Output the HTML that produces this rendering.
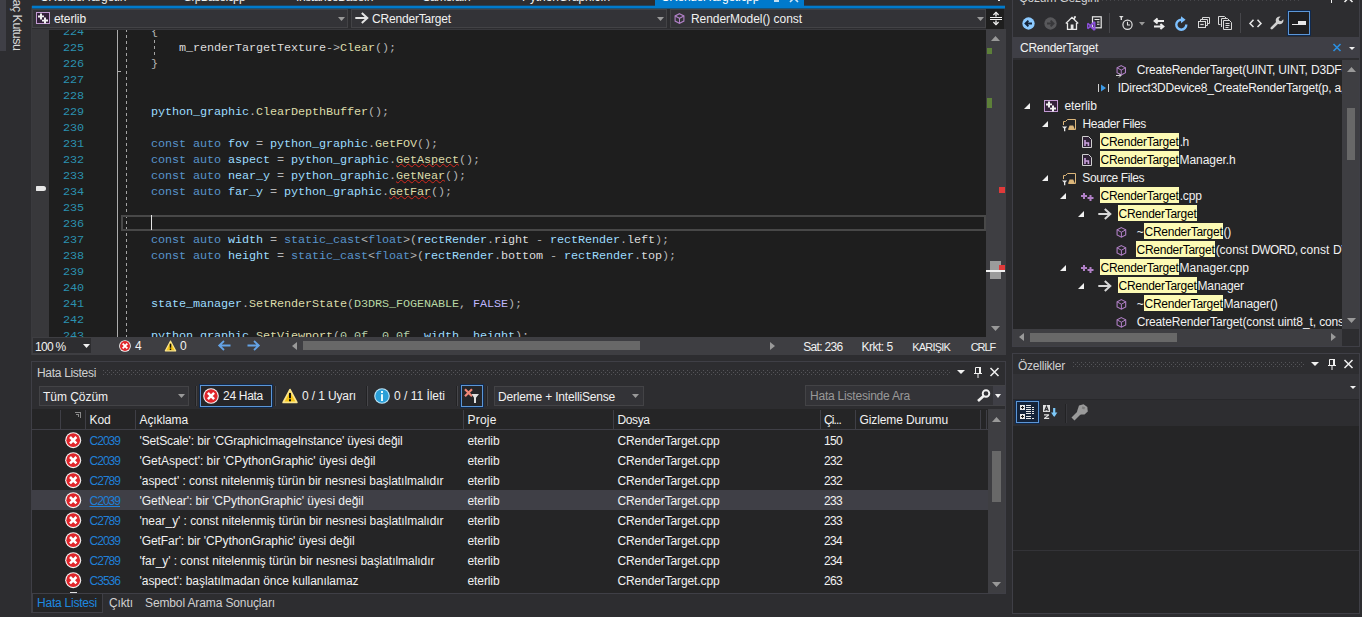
<!DOCTYPE html>
<html><head><meta charset="utf-8">
<style>
*{margin:0;padding:0;box-sizing:border-box}
html,body{width:1362px;height:617px;overflow:hidden;background:#2d2d30}
body{position:relative;font-family:"Liberation Sans",sans-serif;font-size:12px;color:#f1f1f1}
.a{position:absolute}
.t{position:absolute;white-space:pre;line-height:16px;height:16px;font-size:12px;letter-spacing:-0.15px}
svg{position:absolute;overflow:visible}
#ed{position:absolute;left:32px;top:29px;width:954px;height:308px;background:#1e1e1e;overflow:hidden}
.ln{position:absolute;left:0;width:52px;text-align:right;color:#2b91af;font-family:"Liberation Mono",monospace;font-size:11.8px;letter-spacing:-0.08px;line-height:16px;height:16px}
.cl{position:absolute;left:63px;color:#dcdcdc;font-family:"Liberation Mono",monospace;font-size:11.8px;letter-spacing:-0.08px;line-height:16px;height:16px;white-space:pre}
.k{color:#5894cb}.v{color:#9cdcfe}.f{color:#dcdcaa}.e{color:#b8d7a3}.mc{color:#beb7ff}.n{color:#b5cea8}.p{color:#b4b4b4}
.sq{text-decoration:underline wavy #d62a1e 1px;text-underline-offset:0px;text-decoration-skip-ink:none}
.tr{letter-spacing:-0.22px;color:#f1f1f1}
.hl{background:#fdfbac;color:#000;display:inline-block;height:16px;margin-top:-1px;vertical-align:top;padding:1px 1px 0 0;margin-left:-0.3px}

</style></head><body>
<!-- p05_top.py -->
<div class="a" style="left:0;top:0;width:6px;height:51px;background:#3f3f46"></div>
<div class="a" style="left:8.5px;top:-50px;height:100.5px;width:16px;line-height:16px;writing-mode:vertical-rl;text-align:right;white-space:pre;font-size:12.5px;color:#d8d8d8;letter-spacing:-0.520px">Araç Kutusu</div>
<div class="t" style="left:40px;top:-11.2px;letter-spacing:-0.359px;color:#f1f1f1;">CRenderTarget.h</div>
<div class="t" style="left:183px;top:-11.2px;letter-spacing:-0.732px;color:#f1f1f1;">GrpBase.cpp</div>
<div class="t" style="left:296px;top:-11.2px;letter-spacing:-0.410px;color:#f1f1f1;">InstanceBase.h</div>
<div class="t" style="left:422px;top:-11.2px;letter-spacing:-0.586px;color:#f1f1f1;">Camera.h</div>
<div class="t" style="left:522px;top:-11.2px;letter-spacing:-0.093px;color:#f1f1f1;">PythonGraphic.h</div>
<div class="a" style="left:998px;top:0;width:2px;height:1px;background:#f1f1f1"></div>
<div class="a" style="left:32px;top:5px;width:973px;height:1px;background:#1f445f"></div>
<div class="a" style="left:32px;top:8px;width:973px;height:1px;background:#16547e"></div>
<div class="a" style="left:32px;top:6px;width:973px;height:2px;background:#007acc"></div>
<div class="a" style="left:655px;top:0;width:149px;height:8px;background:#007acc"></div>
<div class="t" style="left:661px;top:-11.2px;letter-spacing:-0.357px;color:#ffffff;">CRenderTarget.cpp</div>
<div class="a" style="left:774px;top:0;width:5px;height:1.5px;background:#c4dff2"></div>
<svg style="left:789px;top:-7px" width="10" height="10"><path d="M1 1L9 9M9 1L1 9" stroke="#d0e6f5" stroke-width="1.6"/></svg>
<div class="a" style="left:31px;top:6px;width:1px;height:349px;background:#3a3a3e"></div>
<div class="a" style="left:32px;top:9px;width:973px;height:20px;background:#2d2d30"></div>
<div class="a" style="left:32px;top:9px;width:316px;height:19px;background:#333337;border:1px solid #434346"></div>
<div class="a" style="left:351px;top:9px;width:316px;height:19px;background:#333337;border:1px solid #434346"></div>
<div class="a" style="left:670px;top:9px;width:316px;height:19px;background:#333337;border:1px solid #434346"></div>
<svg style="left:338px;top:17px" width="7" height="4"><path d="M0 0H7L3.5 4Z" fill="#999"/></svg>
<svg style="left:657px;top:17px" width="7" height="4"><path d="M0 0H7L3.5 4Z" fill="#999"/></svg>
<svg style="left:977px;top:17px" width="7" height="4"><path d="M0 0H7L3.5 4Z" fill="#999"/></svg>
<svg style="left:36px;top:12px" width="14" height="12"><rect x="0.5" y="0.5" width="13" height="11" fill="#33203a" stroke="#c39bd3"/><path d="M4 1.5h2v2h2v2h-2v2h-2v-2h-2v-2h2z" fill="#f1f1f1"/><path d="M8 5.5h2v2h2v2h-2v2h-2v-2h-2v-2h2z" fill="#f1f1f1"/><rect x="6" y="5.5" width="2" height="2" fill="#33203a"/></svg>
<div class="t" style="left:54px;top:11px;letter-spacing:-0.098px;color:#f1f1f1;">eterlib</div>
<svg style="left:355px;top:12px" width="14" height="12"><path d="M0.3 6H12M6.8 1L12.3 6L6.8 11" stroke="#e4e4e4" stroke-width="2" fill="none"/></svg>
<div class="t" style="left:372px;top:11px;letter-spacing:-0.183px;color:#f1f1f1;">CRenderTarget</div>
<svg style="left:673.5px;top:12.5px" width="11" height="11" viewBox="0 0 12 12"><path d="M6 0.7L10.8 3.2V8.8L6 11.3L1.2 8.8V3.2Z" fill="none" stroke="#b180c7" stroke-width="1.2"/><path d="M1.2 3.2L6 5.8L10.8 3.2M6 5.8V11.3" fill="none" stroke="#b180c7" stroke-width="1.1"/></svg>
<div class="t" style="left:691px;top:11px;letter-spacing:-0.056px;color:#f1f1f1;">RenderModel() const</div>
<div class="a" style="left:986px;top:9px;width:18px;height:20px;background:#1e1e1e"></div>
<svg style="left:989.5px;top:12px" width="12" height="13"><path d="M0 5.5H12M0 7.5H12" stroke="#f1f1f1" stroke-width="1"/><path d="M6 0.5V4.5M6 8.5V12.5" stroke="#f1f1f1" stroke-width="1.4"/><path d="M3.4 3L6 0.4L8.6 3M3.4 10L6 12.6L8.6 10" stroke="#f1f1f1" stroke-width="1.2" fill="none"/></svg>
<!-- p10_editor.py -->
<div id="ed">
<div class="a" style="left:0;top:0;width:17px;height:308px;background:#38383b"></div>
<div class="a" style="left:85px;top:0;width:1px;height:308px;background:#adadad"></div>
<div class="a" style="left:85px;top:42px;width:4px;height:1px;background:#adadad"></div>
<div class="a" style="left:94px;top:0;width:1px;height:308px;background:repeating-linear-gradient(180deg,#a4a4a4 0 3px,transparent 3px 6px)"></div>
<div class="a" style="left:122px;top:11px;width:1px;height:16px;background:repeating-linear-gradient(180deg,#a4a4a4 0 3px,transparent 3px 6px)"></div>
<div class="a" style="left:89px;top:186px;width:865px;height:16px;border:2px solid #484848"></div>
<div class="a" style="left:119px;top:186px;width:1px;height:15px;background:#e4e4e4"></div>
<div class="a" style="left:4px;top:157px;width:10px;height:5px;background:#e8e8e8;border-radius:1px 3px 3px 1px"></div>
<div class="ln" style="top:-5px">224</div>
<div class="cl" style="top:-5px">        <span class="p">{</span></div>
<div class="ln" style="top:11px">225</div>
<div class="cl" style="top:11px">            m_renderTargetTexture<span class="p">-&gt;</span><span class="f">Clear</span><span class="p">();</span></div>
<div class="ln" style="top:27px">226</div>
<div class="cl" style="top:27px">        <span class="p">}</span></div>
<div class="ln" style="top:43px">227</div>
<div class="ln" style="top:59px">228</div>
<div class="ln" style="top:75px">229</div>
<div class="cl" style="top:75px">        <span class="v">python_graphic</span><span class="p">.</span><span class="f">ClearDepthBuffer</span><span class="p">();</span></div>
<div class="ln" style="top:91px">230</div>
<div class="ln" style="top:107px">231</div>
<div class="cl" style="top:107px">        <span class="k">const auto</span> <span class="v">fov</span> <span class="p">=</span> <span class="v">python_graphic</span><span class="p">.</span><span class="f">GetFOV</span><span class="p">();</span></div>
<div class="ln" style="top:123px">232</div>
<div class="cl" style="top:123px">        <span class="k">const auto</span> <span class="v">aspect</span> <span class="p">=</span> <span class="v">python_graphic</span><span class="p">.</span><span class="f sq">GetAspect</span><span class="p">();</span></div>
<div class="ln" style="top:139px">233</div>
<div class="cl" style="top:139px">        <span class="k">const auto</span> <span class="v">near_y</span> <span class="p">=</span> <span class="v">python_graphic</span><span class="p">.</span><span class="f sq">GetNear</span><span class="p">();</span></div>
<div class="ln" style="top:155px">234</div>
<div class="cl" style="top:155px">        <span class="k">const auto</span> <span class="v">far_y</span> <span class="p">=</span> <span class="v">python_graphic</span><span class="p">.</span><span class="f sq">GetFar</span><span class="p">();</span></div>
<div class="ln" style="top:171px">235</div>
<div class="ln" style="top:187px">236</div>
<div class="ln" style="top:203px">237</div>
<div class="cl" style="top:203px">        <span class="k">const auto</span> <span class="v">width</span> <span class="p">=</span> <span class="k">static_cast</span><span class="p">&lt;</span><span class="k">float</span><span class="p">&gt;(</span><span class="v">rectRender</span><span class="p">.</span>right <span class="p">-</span> <span class="v">rectRender</span><span class="p">.</span>left<span class="p">);</span></div>
<div class="ln" style="top:219px">238</div>
<div class="cl" style="top:219px">        <span class="k">const auto</span> <span class="v">height</span> <span class="p">=</span> <span class="k">static_cast</span><span class="p">&lt;</span><span class="k">float</span><span class="p">&gt;(</span><span class="v">rectRender</span><span class="p">.</span>bottom <span class="p">-</span> <span class="v">rectRender</span><span class="p">.</span>top<span class="p">);</span></div>
<div class="ln" style="top:235px">239</div>
<div class="ln" style="top:251px">240</div>
<div class="ln" style="top:267px">241</div>
<div class="cl" style="top:267px">        <span class="v">state_manager</span><span class="p">.</span><span class="f">SetRenderState</span><span class="p">(</span><span class="e">D3DRS_FOGENABLE</span><span class="p">,</span> <span class="mc">FALSE</span><span class="p">);</span></div>
<div class="ln" style="top:283px">242</div>
<div class="ln" style="top:299px">243</div>
<div class="cl" style="top:299px">        <span class="v">python_graphic</span><span class="p">.</span><span class="f">SetViewport</span><span class="p">(</span><span class="n">0.0f</span><span class="p">,</span> <span class="n">0.0f</span><span class="p">,</span> <span class="v">width</span><span class="p">,</span> <span class="v">height</span><span class="p">);</span></div>
</div>
<div class="a" style="left:32px;top:29px;width:954px;height:1px;background:#38383c"></div>
<!-- p20_edbars.py -->
<div class="a" style="left:986px;top:29px;width:20px;height:308px;background:#3e3e42"></div>
<svg style="left:991px;top:36px" width="9" height="5"><path d="M0 5H9L4.5 0Z" fill="#999"/></svg>
<svg style="left:991px;top:326px" width="9" height="5"><path d="M0 0H9L4.5 5Z" fill="#999"/></svg>
<div class="a" style="left:987px;top:48px;width:5px;height:6px;background:#5d8039"></div>
<div class="a" style="left:987px;top:98px;width:5px;height:10px;background:#5d8039"></div>
<div class="a" style="left:999px;top:187px;width:6px;height:6px;background:#e03a3a"></div>
<div class="a" style="left:990px;top:261px;width:11px;height:18px;background:#9b9b9b"></div>
<div class="a" style="left:999px;top:265px;width:6px;height:6px;background:#e03a3a"></div>
<div class="a" style="left:986px;top:270px;width:19px;height:2px;background:#f1f1f1"></div>
<div class="a" style="left:32px;top:337px;width:974px;height:18px;background:#3e3e42"></div>
<div class="a" style="left:33px;top:338px;width:58px;height:15px;background:#2d2d30"></div>
<div class="t" style="left:35px;top:338.6px;letter-spacing:-0.706px;color:#f1f1f1;">100 %</div>
<svg style="left:83px;top:344px" width="7" height="4"><path d="M0 0H7L3.5 4Z" fill="#f1f1f1"/></svg>
<svg style="left:119px;top:340px" width="12" height="12" viewBox="0 0 16 16"><circle cx="8" cy="8" r="7.8" fill="#f6f6f6"/><circle cx="8" cy="8" r="6.7" fill="#e0262b"/><path d="M4.9 4.9L11.1 11.1M11.1 4.9L4.9 11.1" stroke="#fff" stroke-width="2.5"/></svg>
<div class="t" style="left:135px;top:338px;color:#f1f1f1;">4</div>
<svg style="left:164px;top:340px" width="13" height="12" viewBox="0 0 16 16"><path d="M8 1.6L14.8 14.4H1.2Z" fill="#f5c518" stroke="#fbe58c" stroke-width="1.8" stroke-linejoin="round"/><path d="M7 5h2v5.3h-2zM7 11.3h2v2h-2z" fill="#14110a"/></svg>
<div class="t" style="left:180px;top:338px;color:#f1f1f1;">0</div>
<svg style="left:218px;top:340px" width="13" height="11"><path d="M12.5 5.5H1.5M6 1L1.2 5.5L6 10" stroke="#64a3e6" stroke-width="1.8" fill="none"/></svg>
<svg style="left:247px;top:340px" width="13" height="11"><path d="M0.5 5.5H11.5M7 1L11.8 5.5L7 10" stroke="#64a3e6" stroke-width="1.8" fill="none"/></svg>
<svg style="left:292px;top:342px" width="5" height="8"><path d="M5 0V8L0 4Z" fill="#999"/></svg>
<div class="a" style="left:303px;top:341px;width:337px;height:9px;background:#686868"></div>
<svg style="left:770px;top:342px" width="5" height="8"><path d="M0 0V8L5 4Z" fill="#999"/></svg>
<div class="t" style="left:803.3px;top:339px;letter-spacing:-0.688px;color:#f1f1f1;">Sat: 236</div>
<div class="t" style="left:861.5px;top:339px;letter-spacing:-0.498px;color:#f1f1f1;">Krkt: 5</div>
<div class="t" style="left:912.3px;top:339.3px;font-size:11px;letter-spacing:-0.801px;color:#f1f1f1;">KARIŞIK</div>
<div class="t" style="left:970.8px;top:339.3px;font-size:11px;letter-spacing:-1.134px;color:#f1f1f1;">CRLF</div>
<!-- p30_errlist.py -->
<div class="a" style="left:31px;top:361px;width:975px;height:233px;background:#2d2d30;border:1px solid #3f3f46;border-bottom:none"></div>
<div class="a" style="left:31px;top:594px;width:1px;height:19px;background:#3f3f46"></div>
<div class="t" style="left:37px;top:364.5px;letter-spacing:-0.309px;color:#d0d0d0;">Hata Listesi</div>
<svg style="left:103px;top:370px" width="847" height="5"><defs><pattern id="gp" width="4" height="4" patternUnits="userSpaceOnUse"><rect x="0" y="0" width="1" height="1" fill="#545458"/><rect x="2" y="2" width="1" height="1" fill="#545458"/></pattern></defs><rect width="847" height="5" fill="url(#gp)"/></svg>
<svg style="left:957px;top:370px" width="8" height="4"><path d="M0 0H8L4 4Z" fill="#f1f1f1"/></svg><svg style="left:974px;top:367px" width="8" height="11"><path d="M1.5 6V0.5H6M0 6.5H8M4 7V11" stroke="#f1f1f1" stroke-width="1" fill="none"/><path d="M6 0V6" stroke="#f1f1f1" stroke-width="2"/></svg><svg style="left:990px;top:368px" width="9" height="8"><path d="M0.5 0L8.5 8M8.5 0L0.5 8" stroke="#f1f1f1" stroke-width="1.5"/></svg>
<div class="a" style="left:39px;top:386px;width:150px;height:20px;background:#333337;border:1px solid #434346"></div>
<div class="t" style="left:43px;top:389px;letter-spacing:-0.038px;color:#f1f1f1;">Tüm Çözüm</div>
<svg style="left:178px;top:394px" width="7" height="4"><path d="M0 0H7L3.5 4Z" fill="#999"/></svg>
<div class="a" style="left:195px;top:386px;width:1px;height:20px;background:#222224"></div><div class="a" style="left:196px;top:386px;width:1px;height:20px;background:#46464a"></div>
<div class="a" style="left:274px;top:386px;width:1px;height:20px;background:#222224"></div><div class="a" style="left:275px;top:386px;width:1px;height:20px;background:#46464a"></div>
<div class="a" style="left:366px;top:386px;width:1px;height:20px;background:#222224"></div><div class="a" style="left:367px;top:386px;width:1px;height:20px;background:#46464a"></div>
<div class="a" style="left:456px;top:386px;width:1px;height:20px;background:#222224"></div><div class="a" style="left:457px;top:386px;width:1px;height:20px;background:#46464a"></div>
<div class="a" style="left:486px;top:386px;width:1px;height:20px;background:#222224"></div><div class="a" style="left:487px;top:386px;width:1px;height:20px;background:#46464a"></div>
<div class="a" style="left:200px;top:385px;width:72px;height:22px;background:#252528;border:1px solid #5c96d6;box-shadow:0 0 0 1px #10294d"></div>
<svg style="left:203px;top:388px" width="16" height="16" viewBox="0 0 16 16"><circle cx="8" cy="8" r="7.8" fill="#f6f6f6"/><circle cx="8" cy="8" r="6.7" fill="#e0262b"/><path d="M4.9 4.9L11.1 11.1M11.1 4.9L4.9 11.1" stroke="#fff" stroke-width="2.5"/></svg>
<div class="t" style="left:223px;top:388px;letter-spacing:-0.290px;color:#f1f1f1;">24 Hata</div>
<svg style="left:282px;top:388px" width="16" height="16" viewBox="0 0 16 16"><path d="M8 1.6L14.8 14.4H1.2Z" fill="#f5c518" stroke="#fbe58c" stroke-width="1.8" stroke-linejoin="round"/><path d="M7 5h2v5.3h-2zM7 11.3h2v2h-2z" fill="#14110a"/></svg>
<div class="t" style="left:302px;top:388px;letter-spacing:-0.124px;color:#f1f1f1;">0 / 1 Uyarı</div>
<svg style="left:374px;top:388px" width="16" height="16" viewBox="0 0 16 16"><circle cx="8" cy="8" r="7.8" fill="#bfe6fa"/><circle cx="8" cy="8" r="6.7" fill="#2a9fd8"/><path d="M7 3h2v2h-2zM7 6.3h2v6.7h-2z" fill="#e6fbff"/></svg>
<div class="t" style="left:394px;top:388px;letter-spacing:-0.012px;color:#f1f1f1;">0 / 11 İleti</div>
<div class="a" style="left:461px;top:385px;width:22px;height:22px;background:#252528;border:1px solid #5c96d6;box-shadow:0 0 0 1px #10294d"></div>
<svg style="left:464px;top:388px" width="16" height="16"><path d="M1 1.2L8 8.2M8 1.2L1 8.2" stroke="#f08878" stroke-width="2.2"/><path d="M7.6 6H15L12 9.8V15H10V9.8Z" fill="#e0e0e0"/></svg>
<div class="a" style="left:494px;top:386px;width:150px;height:20px;background:#333337;border:1px solid #434346"></div>
<div class="t" style="left:498px;top:389px;letter-spacing:-0.185px;color:#f1f1f1;">Derleme + IntelliSense</div>
<svg style="left:632px;top:394px" width="7" height="4"><path d="M0 0H7L3.5 4Z" fill="#999"/></svg>
<div class="a" style="left:805px;top:385px;width:200px;height:21px;background:#333337;border:1px solid #434346"></div>
<div class="a" style="left:993px;top:386px;width:12px;height:19px;background:#3f3f46"></div>
<div class="t" style="left:810px;top:388px;letter-spacing:-0.214px;color:#999999;">Hata Listesinde Ara</div>
<svg style="left:977px;top:389px" width="14" height="13"><circle cx="9" cy="4.5" r="3.3" fill="none" stroke="#f1f1f1" stroke-width="1.9"/><path d="M6.6 7L1 12" stroke="#f1f1f1" stroke-width="2.6"/></svg>
<svg style="left:995px;top:394px" width="6" height="4"><path d="M0 0H6L3 4Z" fill="#f1f1f1"/></svg>
<div class="a" style="left:32px;top:409px;width:956px;height:184px;background:#252526"></div>
<div class="a" style="left:32px;top:429px;width:956px;height:1px;background:#3f3f46"></div>
<div class="a" style="left:60px;top:410px;width:1px;height:19px;background:#3f3f46"></div>
<div class="a" style="left:85px;top:410px;width:1px;height:19px;background:#3f3f46"></div>
<div class="a" style="left:135px;top:410px;width:1px;height:19px;background:#3f3f46"></div>
<div class="a" style="left:463px;top:410px;width:1px;height:19px;background:#3f3f46"></div>
<div class="a" style="left:613px;top:410px;width:1px;height:19px;background:#3f3f46"></div>
<div class="a" style="left:820px;top:410px;width:1px;height:19px;background:#3f3f46"></div>
<div class="a" style="left:855px;top:410px;width:1px;height:19px;background:#3f3f46"></div>
<div class="a" style="left:980px;top:410px;width:1px;height:19px;background:#3f3f46"></div>
<div class="a" style="left:986px;top:410px;width:1px;height:19px;background:#3f3f46"></div>
<svg style="left:75px;top:412px" width="6" height="6"><path d="M0 0.5H6M5.5 0V6M1 2.5H4M3.5 2V5" stroke="#8a8a8a" stroke-width="1" fill="none"/></svg>
<div class="t" style="left:89.5px;top:411.5px;letter-spacing:-0.120px;color:#f1f1f1;">Kod</div>
<div class="t" style="left:139.5px;top:411.5px;letter-spacing:-0.107px;color:#f1f1f1;">Açıklama</div>
<div class="t" style="left:467.5px;top:411.5px;letter-spacing:0.197px;color:#f1f1f1;">Proje</div>
<div class="t" style="left:617.5px;top:411.5px;letter-spacing:-0.403px;color:#f1f1f1;">Dosya</div>
<div class="t" style="left:824px;top:411.5px;letter-spacing:-0.869px;color:#f1f1f1;">Çi...</div>
<div class="t" style="left:859.5px;top:411.5px;letter-spacing:-0.109px;color:#f1f1f1;">Gizleme Durumu</div>
<div class="a" style="left:32px;top:490px;width:956px;height:20px;background:#3f3f46"></div>
<svg style="left:65px;top:432px" width="16.4" height="16.4" viewBox="0 0 16 16"><circle cx="8" cy="8" r="7.8" fill="#f6f6f6"/><circle cx="8" cy="8" r="6.7" fill="#e0262b"/><path d="M4.9 4.9L11.1 11.1M11.1 4.9L4.9 11.1" stroke="#fff" stroke-width="2.5"/></svg>
<div class="t" style="left:89.5px;top:433px;letter-spacing:-0.975px;color:#2080d8;">C2039</div>
<div class="t" style="left:139.5px;top:433px;letter-spacing:-0.137px;color:#f1f1f1;">'SetScale': bir 'CGraphicImageInstance' üyesi değil</div>
<div class="t" style="left:467.5px;top:433px;letter-spacing:-0.098px;color:#f1f1f1;">eterlib</div>
<div class="t" style="left:617.5px;top:433px;letter-spacing:-0.121px;color:#f1f1f1;">CRenderTarget.cpp</div>
<div class="t" style="left:824px;top:433px;letter-spacing:-0.677px;color:#f1f1f1;">150</div>
<svg style="left:65px;top:452px" width="16.4" height="16.4" viewBox="0 0 16 16"><circle cx="8" cy="8" r="7.8" fill="#f6f6f6"/><circle cx="8" cy="8" r="6.7" fill="#e0262b"/><path d="M4.9 4.9L11.1 11.1M11.1 4.9L4.9 11.1" stroke="#fff" stroke-width="2.5"/></svg>
<div class="t" style="left:89.5px;top:453px;letter-spacing:-0.975px;color:#2080d8;">C2039</div>
<div class="t" style="left:139.5px;top:453px;letter-spacing:-0.014px;color:#f1f1f1;">'GetAspect': bir 'CPythonGraphic' üyesi değil</div>
<div class="t" style="left:467.5px;top:453px;letter-spacing:-0.098px;color:#f1f1f1;">eterlib</div>
<div class="t" style="left:617.5px;top:453px;letter-spacing:-0.121px;color:#f1f1f1;">CRenderTarget.cpp</div>
<div class="t" style="left:824px;top:453px;letter-spacing:-0.677px;color:#f1f1f1;">232</div>
<svg style="left:65px;top:472px" width="16.4" height="16.4" viewBox="0 0 16 16"><circle cx="8" cy="8" r="7.8" fill="#f6f6f6"/><circle cx="8" cy="8" r="6.7" fill="#e0262b"/><path d="M4.9 4.9L11.1 11.1M11.1 4.9L4.9 11.1" stroke="#fff" stroke-width="2.5"/></svg>
<div class="t" style="left:89.5px;top:473px;letter-spacing:-0.975px;color:#2080d8;">C2789</div>
<div class="t" style="left:139.5px;top:473px;letter-spacing:-0.034px;color:#f1f1f1;">'aspect' : const nitelenmiş türün bir nesnesi başlatılmalıdır</div>
<div class="t" style="left:467.5px;top:473px;letter-spacing:-0.098px;color:#f1f1f1;">eterlib</div>
<div class="t" style="left:617.5px;top:473px;letter-spacing:-0.121px;color:#f1f1f1;">CRenderTarget.cpp</div>
<div class="t" style="left:824px;top:473px;letter-spacing:-0.677px;color:#f1f1f1;">232</div>
<svg style="left:65px;top:492px" width="16.4" height="16.4" viewBox="0 0 16 16"><circle cx="8" cy="8" r="7.8" fill="#f6f6f6"/><circle cx="8" cy="8" r="6.7" fill="#e0262b"/><path d="M4.9 4.9L11.1 11.1M11.1 4.9L4.9 11.1" stroke="#fff" stroke-width="2.5"/></svg>
<div class="t" style="left:89.5px;top:493px;letter-spacing:-0.975px;color:#2080d8;text-decoration:underline;">C2039</div>
<div class="t" style="left:139.5px;top:493px;letter-spacing:-0.045px;color:#f1f1f1;">'GetNear': bir 'CPythonGraphic' üyesi değil</div>
<div class="t" style="left:467.5px;top:493px;letter-spacing:-0.098px;color:#f1f1f1;">eterlib</div>
<div class="t" style="left:617.5px;top:493px;letter-spacing:-0.121px;color:#f1f1f1;">CRenderTarget.cpp</div>
<div class="t" style="left:824px;top:493px;letter-spacing:-0.677px;color:#f1f1f1;">233</div>
<svg style="left:65px;top:512px" width="16.4" height="16.4" viewBox="0 0 16 16"><circle cx="8" cy="8" r="7.8" fill="#f6f6f6"/><circle cx="8" cy="8" r="6.7" fill="#e0262b"/><path d="M4.9 4.9L11.1 11.1M11.1 4.9L4.9 11.1" stroke="#fff" stroke-width="2.5"/></svg>
<div class="t" style="left:89.5px;top:513px;letter-spacing:-0.975px;color:#2080d8;">C2789</div>
<div class="t" style="left:139.5px;top:513px;letter-spacing:-0.056px;color:#f1f1f1;">'near_y' : const nitelenmiş türün bir nesnesi başlatılmalıdır</div>
<div class="t" style="left:467.5px;top:513px;letter-spacing:-0.098px;color:#f1f1f1;">eterlib</div>
<div class="t" style="left:617.5px;top:513px;letter-spacing:-0.121px;color:#f1f1f1;">CRenderTarget.cpp</div>
<div class="t" style="left:824px;top:513px;letter-spacing:-0.677px;color:#f1f1f1;">233</div>
<svg style="left:65px;top:532px" width="16.4" height="16.4" viewBox="0 0 16 16"><circle cx="8" cy="8" r="7.8" fill="#f6f6f6"/><circle cx="8" cy="8" r="6.7" fill="#e0262b"/><path d="M4.9 4.9L11.1 11.1M11.1 4.9L4.9 11.1" stroke="#fff" stroke-width="2.5"/></svg>
<div class="t" style="left:89.5px;top:533px;letter-spacing:-0.975px;color:#2080d8;">C2039</div>
<div class="t" style="left:139.5px;top:533px;letter-spacing:-0.070px;color:#f1f1f1;">'GetFar': bir 'CPythonGraphic' üyesi değil</div>
<div class="t" style="left:467.5px;top:533px;letter-spacing:-0.098px;color:#f1f1f1;">eterlib</div>
<div class="t" style="left:617.5px;top:533px;letter-spacing:-0.121px;color:#f1f1f1;">CRenderTarget.cpp</div>
<div class="t" style="left:824px;top:533px;letter-spacing:-0.677px;color:#f1f1f1;">234</div>
<svg style="left:65px;top:552px" width="16.4" height="16.4" viewBox="0 0 16 16"><circle cx="8" cy="8" r="7.8" fill="#f6f6f6"/><circle cx="8" cy="8" r="6.7" fill="#e0262b"/><path d="M4.9 4.9L11.1 11.1M11.1 4.9L4.9 11.1" stroke="#fff" stroke-width="2.5"/></svg>
<div class="t" style="left:89.5px;top:553px;letter-spacing:-0.975px;color:#2080d8;">C2789</div>
<div class="t" style="left:139.5px;top:553px;letter-spacing:-0.040px;color:#f1f1f1;">'far_y' : const nitelenmiş türün bir nesnesi başlatılmalıdır</div>
<div class="t" style="left:467.5px;top:553px;letter-spacing:-0.098px;color:#f1f1f1;">eterlib</div>
<div class="t" style="left:617.5px;top:553px;letter-spacing:-0.121px;color:#f1f1f1;">CRenderTarget.cpp</div>
<div class="t" style="left:824px;top:553px;letter-spacing:-0.677px;color:#f1f1f1;">234</div>
<svg style="left:65px;top:572px" width="16.4" height="16.4" viewBox="0 0 16 16"><circle cx="8" cy="8" r="7.8" fill="#f6f6f6"/><circle cx="8" cy="8" r="6.7" fill="#e0262b"/><path d="M4.9 4.9L11.1 11.1M11.1 4.9L4.9 11.1" stroke="#fff" stroke-width="2.5"/></svg>
<div class="t" style="left:89.5px;top:573px;letter-spacing:-0.975px;color:#2080d8;">C3536</div>
<div class="t" style="left:139.5px;top:573px;letter-spacing:-0.042px;color:#f1f1f1;">'aspect': başlatılmadan önce kullanılamaz</div>
<div class="t" style="left:467.5px;top:573px;letter-spacing:-0.098px;color:#f1f1f1;">eterlib</div>
<div class="t" style="left:617.5px;top:573px;letter-spacing:-0.121px;color:#f1f1f1;">CRenderTarget.cpp</div>
<div class="t" style="left:824px;top:573px;letter-spacing:-0.677px;color:#f1f1f1;">263</div>
<div class="a" style="left:69.5px;top:592px;width:7px;height:1px;background:#e0e0e0"></div>
<div class="a" style="left:988px;top:409px;width:17px;height:184px;background:#3e3e42"></div>
<svg style="left:992px;top:417px" width="9" height="5"><path d="M0 5H9L4.5 0Z" fill="#999"/></svg>
<svg style="left:992px;top:582px" width="9" height="5"><path d="M0 0H9L4.5 5Z" fill="#999"/></svg>
<div class="a" style="left:992px;top:451px;width:9px;height:51px;background:#686868"></div>
<div class="a" style="left:32px;top:593px;width:973px;height:1px;background:#3f3f46"></div>
<div class="a" style="left:32px;top:594px;width:71px;height:19px;background:#252526;border:1px solid #3f3f46;border-top:none"></div>
<div class="t" style="left:37px;top:595px;letter-spacing:-0.225px;color:#1d8ae0;">Hata Listesi</div>
<div class="t" style="left:109px;top:595px;letter-spacing:-0.134px;color:#d0d0d0;">Çıktı</div>
<div class="t" style="left:145px;top:595px;letter-spacing:-0.124px;color:#d0d0d0;">Sembol Arama Sonuçları</div>
<!-- p40_solexp.py -->
<div class="a" style="left:1012px;top:-2px;width:348px;height:349px;background:#2d2d30;border:1px solid #3f3f46"></div>
<div class="t" style="left:1019px;top:-10.5px;letter-spacing:-0.156px;color:#d0d0d0;">Çözüm Gezgini</div>
<div class="a" style="left:1102px;top:0;width:200px;height:1px;background-image:linear-gradient(90deg,#46464a 1px,transparent 1px);background-size:4px 1px"></div>
<div class="a" style="left:1331px;top:0;width:1px;height:3px;background:#f1f1f1"></div>
<svg style="left:1344px;top:-6px" width="9" height="8"><path d="M0.5 0L8.5 8M8.5 0L0.5 8" stroke="#f1f1f1" stroke-width="1.5"/></svg>
<svg style="left:1021.5px;top:16.5px" width="13" height="13"><circle cx="6.5" cy="6.5" r="6.15" fill="#8ccaff"/><path d="M10 6.5H4M6.4 3.6L3.5 6.5L6.4 9.4" stroke="#14243a" stroke-width="1.9" fill="none"/></svg><svg style="left:1043.5px;top:16.5px" width="13" height="13"><circle cx="6.5" cy="6.5" r="6.15" fill="#58585b"/><path d="M3 6.5H9M6.6 3.6L9.5 6.5L6.6 9.4" stroke="#38383b" stroke-width="1.9" fill="none"/></svg><svg style="left:1065px;top:16px" width="14" height="14"><path d="M0.8 7.5L7 1.3L13.2 7.5M2.5 7V13.3H11.5V7M9.5 3.5V1H11" stroke="#e8e8e8" stroke-width="1.3" fill="none"/><rect x="5.7" y="8.5" width="2.8" height="4.5" fill="#e8e8e8"/></svg><svg style="left:1086.5px;top:15.5px" width="15" height="15"><rect x="5.5" y="0.8" width="8.7" height="11" fill="none" stroke="#e8e8e8" stroke-width="1.2"/><path d="M7.5 3.5H12.5M10 6H12.5M10 8.3H12.5" stroke="#e8e8e8" stroke-width="1.1"/><path d="M0 7.5L1.2 6.8L3.4 8.6L6.8 5.2L8.5 6V14L6.8 14.8L3.4 11.4L1.2 13.2L0 12.5ZM1.3 8.7V11.3L2.6 10ZM6.6 8V12L4.3 10Z" fill="#8a4fd8" fill-rule="evenodd"/></svg><div class="a" style="left:1109px;top:13px;width:1px;height:20px;background:#46464a"></div><svg style="left:1118.5px;top:16px" width="14" height="14"><path d="M0 0H4.6L3 1.8V4H1.6V1.8Z" fill="#e0e0e0"/><circle cx="8.5" cy="8.7" r="4.6" fill="none" stroke="#e0e0e0" stroke-width="1.2"/><path d="M8.5 5.8V9H11" stroke="#e0e0e0" stroke-width="1.1" fill="none"/></svg><svg style="left:1139px;top:22px" width="6" height="3.5"><path d="M0 0H6L3 3.5Z" fill="#999"/></svg><svg style="left:1153px;top:17.5px" width="12" height="12"><path d="M11 3H2M4.6 0.4L1.6 3L4.6 5.6M1 8.5H10M7.4 5.9L10.4 8.5L7.4 11.1" stroke="#ececec" stroke-width="2" fill="none"/></svg><svg style="left:1174.5px;top:16px" width="13" height="15"><path d="M11.3 8.6A5 5 0 1 1 6.5 3.7" stroke="#7cc0ff" stroke-width="2.4" fill="none"/><path d="M6 0.2L10.6 3.7L6 7.2Z" fill="#7cc0ff"/></svg><svg style="left:1197.5px;top:17px" width="12" height="11"><path d="M4.5 2.5V0.5H11.5V6.5H9.5" stroke="#d8d8d8" stroke-width="1" fill="none"/><path d="M2.5 4.5V2.5H9.5V8.5H7.5" stroke="#d8d8d8" stroke-width="1" fill="none"/><rect x="0.5" y="4.5" width="7" height="6" fill="none" stroke="#d8d8d8" stroke-width="1"/><path d="M2.3 7.5H5.7" stroke="#d8d8d8" stroke-width="1.2"/></svg><svg style="left:1217.5px;top:16px" width="15" height="14"><path d="M2.5 8.5H0.5V0.5H6.5L8 2" stroke="#d8d8d8" stroke-width="1" fill="none"/><path d="M3.5 11V2.5H9.5L11.5 4.5V5" stroke="#d8d8d8" stroke-width="1" fill="none"/><path d="M5.5 4.5H11.5L13.5 6.5V13.5H5.5Z" stroke="#d8d8d8" stroke-width="1" fill="none"/><path d="M7.5 7.5H11.5M7.5 9.5H11.5M7.5 11.5H10.5" stroke="#d8d8d8" stroke-width="1"/></svg><div class="a" style="left:1240px;top:13px;width:1px;height:20px;background:#46464a"></div><svg style="left:1248.5px;top:18.5px" width="13" height="9"><path d="M4.5 0.7L1 4.4L4.5 8.1M8.5 0.7L12 4.4L8.5 8.1" stroke="#e8e8e8" stroke-width="1.5" fill="none"/></svg><svg style="left:1270px;top:16px" width="14" height="14"><path d="M1.8 12.2L8 6" stroke="#d0d0d0" stroke-width="2.6" stroke-linecap="round"/><path d="M13.3 3.2A3.9 3.9 0 1 1 10.6 0.6L8.6 3L9.3 4.8L11.2 5.3Z" fill="#d0d0d0"/></svg><div class="a" style="left:1288px;top:11px;width:22px;height:24px;background:#1e1e20;border:1px solid #5c96d6;box-shadow:0 0 0 1px #10294d"></div><div class="a" style="left:1292px;top:24px;width:14px;height:1px;background:#e8e8e8"></div><div class="a" style="left:1298px;top:21px;width:8px;height:4px;background:#e8e8e8"></div>
<div class="a" style="left:1013px;top:37px;width:346px;height:21px;background:#3f3f46"></div>
<div class="t" style="left:1020px;top:40.3px;letter-spacing:-0.260px;color:#f1f1f1;">CRenderTarget</div>
<svg style="left:1333px;top:44px" width="8" height="7"><path d="M0.5 0L7.5 7M7.5 0L0.5 7" stroke="#2b8fe0" stroke-width="1.6"/></svg>
<svg style="left:1349px;top:46.5px" width="6" height="3"><path d="M0 0H6L3 3Z" fill="#f1f1f1"/></svg>
<div class="a" style="left:1013px;top:60px;width:329px;height:269px;background:#252526;overflow:hidden" id="tree">
<svg style="left:103px;top:5px" width="10.5" height="10.5" viewBox="0 0 12 12"><path d="M6 0.7L10.8 3.2V8.8L6 11.3L1.2 8.8V3.2Z" fill="none" stroke="#b180c7" stroke-width="1.2"/><path d="M1.2 3.2L6 5.8L10.8 3.2M6 5.8V11.3" fill="none" stroke="#b180c7" stroke-width="1.1"/></svg>
<svg style="left:102.5px;top:12.5px" width="6" height="5"><path d="M0 2.5H5M3 0.5L5 2.5L3 4.5" stroke="#d0d0d0" stroke-width="1" fill="none"/></svg>
<div class="t" style="left:123.7px;top:2.3px;letter-spacing:-0.179px;color:#f1f1f1;">CreateRenderTarget(UINT, </div>
<div class="t" style="left:265.3px;top:2.3px;letter-spacing:-0.107px;color:#f1f1f1;">UINT, </div>
<div class="t tr" style="left:298px;top:2.3px;color:#f1f1f1;">D3DFORMAT</div>
<svg style="left:85px;top:24px" width="11" height="8"><path d="M0.5 0V8M10.5 0V8" stroke="#d0d0d0" stroke-width="1"/><path d="M3 0.5V7.5L8 4Z" fill="#3c9be8"/></svg>
<div class="t" style="left:104.7px;top:20.3px;letter-spacing:-0.241px;color:#f1f1f1;">IDirect3DDevice8_CreateRenderTarget(p, </div>
<div class="t tr" style="left:321.4px;top:20.3px;color:#f1f1f1;">a, b</div>
<svg style="left:11px;top:43px" width="6" height="6"><path d="M6 0V6H0Z" fill="#f1f1f1"/></svg>
<svg style="left:31px;top:40px" width="14" height="12"><rect x="0.5" y="0.5" width="13" height="11" fill="#33203a" stroke="#c39bd3"/><path d="M4 1.5h2v2h2v2h-2v2h-2v-2h-2v-2h2z" fill="#f1f1f1"/><path d="M8 5.5h2v2h2v2h-2v2h-2v-2h-2v-2h2z" fill="#f1f1f1"/><rect x="6" y="5.5" width="2" height="2" fill="#33203a"/></svg>
<div class="t" style="left:51.4px;top:38.3px;letter-spacing:-0.041px;color:#f1f1f1;">eterlib</div>
<svg style="left:29px;top:61px" width="6" height="6"><path d="M6 0V6H0Z" fill="#f1f1f1"/></svg>
<svg style="left:49px;top:59px" width="14" height="13"><path d="M3.5 2.5L5.5 0.5H13.5V10.5H6.5M3.5 2.5H1.5V6" fill="none" stroke="#dcb67a" stroke-width="1"/><path d="M6 10.5L7.6 6.5H11.2L13 10.5Z" fill="#dcb67a"/><path d="M0 7.5H5.2L3.3 9.6V12.2H2V9.6Z" fill="#e8e8e8"/></svg>
<div class="t" style="left:69.6px;top:56.3px;letter-spacing:-0.403px;color:#f1f1f1;">Header Files</div>
<svg style="left:69px;top:76px" width="10" height="12"><path d="M0.5 0.5H6.5L9.5 3.5V11.5H0.5Z" fill="#2f2236" stroke="#cfcfcf" stroke-width="1"/><path d="M3 4V10M3 7H6.4V10" stroke="#c9a0dc" stroke-width="1.6" fill="none"/></svg>
<div class="a" style="left:86.7px;top:73.3px;width:79.4px;height:16px;background:#fcfab4"></div>
<div class="t" style="left:87.5px;top:74.3px;letter-spacing:-0.260px;color:#000;">CRenderTarget</div>
<div class="t" style="left:166.7px;top:74.3px;letter-spacing:-0.508px;color:#f1f1f1;">.h</div>
<svg style="left:69px;top:94px" width="10" height="12"><path d="M0.5 0.5H6.5L9.5 3.5V11.5H0.5Z" fill="#2f2236" stroke="#cfcfcf" stroke-width="1"/><path d="M3 4V10M3 7H6.4V10" stroke="#c9a0dc" stroke-width="1.6" fill="none"/></svg>
<div class="a" style="left:86.7px;top:91.3px;width:79.4px;height:16px;background:#fcfab4"></div>
<div class="t" style="left:87.5px;top:92.3px;letter-spacing:-0.260px;color:#000;">CRenderTarget</div>
<div class="t" style="left:166.5px;top:92.3px;letter-spacing:-0.058px;color:#f1f1f1;">Manager.h</div>
<svg style="left:29px;top:115px" width="6" height="6"><path d="M6 0V6H0Z" fill="#f1f1f1"/></svg>
<svg style="left:49px;top:113px" width="14" height="13"><path d="M3.5 2.5L5.5 0.5H13.5V10.5H6.5M3.5 2.5H1.5V6" fill="none" stroke="#dcb67a" stroke-width="1"/><path d="M6 10.5L7.6 6.5H11.2L13 10.5Z" fill="#dcb67a"/><path d="M0 7.5H5.2L3.3 9.6V12.2H2V9.6Z" fill="#e8e8e8"/></svg>
<div class="t" style="left:69.3px;top:110.3px;letter-spacing:-0.417px;color:#f1f1f1;">Source Files</div>
<svg style="left:47px;top:133px" width="6" height="6"><path d="M6 0V6H0Z" fill="#f1f1f1"/></svg>
<svg style="left:68px;top:132.5px" width="13" height="8"><path d="M3 0V6M0 3H6" stroke="#b180c7" stroke-width="2"/><path d="M9.5 2V8M6.5 5H12.5" stroke="#b180c7" stroke-width="2"/></svg>
<div class="a" style="left:86.7px;top:127.3px;width:79.4px;height:16px;background:#fcfab4"></div>
<div class="t" style="left:87.5px;top:128.3px;letter-spacing:-0.260px;color:#000;">CRenderTarget</div>
<div class="t" style="left:166.7px;top:128.3px;letter-spacing:-0.147px;color:#f1f1f1;">.cpp</div>
<svg style="left:65px;top:151px" width="6" height="6"><path d="M6 0V6H0Z" fill="#f1f1f1"/></svg>
<svg style="left:85px;top:148px" width="14" height="12"><path d="M0.3 6H12M6.8 1L12.3 6L6.8 11" stroke="#d8d8d8" stroke-width="2" fill="none"/></svg>
<div class="a" style="left:104.7px;top:145.3px;width:79.4px;height:16px;background:#fcfab4"></div>
<div class="t" style="left:105.5px;top:146.3px;letter-spacing:-0.260px;color:#000;">CRenderTarget</div>
<svg style="left:102.5px;top:166.7px" width="10.8" height="10.8" viewBox="0 0 12 12"><path d="M6 0.7L10.8 3.2V8.8L6 11.3L1.2 8.8V3.2Z" fill="none" stroke="#b180c7" stroke-width="1.2"/><path d="M1.2 3.2L6 5.8L10.8 3.2M6 5.8V11.3" fill="none" stroke="#b180c7" stroke-width="1.1"/></svg>
<div class="t tr" style="left:123.7px;top:164.3px;color:#f1f1f1;">~</div>
<div class="a" style="left:130.7px;top:163.3px;width:79.4px;height:16px;background:#fcfab4"></div>
<div class="t" style="left:131.5px;top:164.3px;letter-spacing:-0.260px;color:#000;">CRenderTarget</div>
<div class="t" style="left:210.5px;top:164.3px;letter-spacing:-0.350px;color:#f1f1f1;">()</div>
<svg style="left:102.5px;top:184.7px" width="10.8" height="10.8" viewBox="0 0 12 12"><path d="M6 0.7L10.8 3.2V8.8L6 11.3L1.2 8.8V3.2Z" fill="none" stroke="#b180c7" stroke-width="1.2"/><path d="M1.2 3.2L6 5.8L10.8 3.2M6 5.8V11.3" fill="none" stroke="#b180c7" stroke-width="1.1"/></svg>
<div class="a" style="left:122.7px;top:181.3px;width:79.4px;height:16px;background:#fcfab4"></div>
<div class="t" style="left:123.5px;top:182.3px;letter-spacing:-0.260px;color:#000;">CRenderTarget</div>
<div class="t" style="left:202.7px;top:182.3px;letter-spacing:-0.059px;color:#f1f1f1;">(const </div>
<div class="t" style="left:238.3px;top:182.3px;letter-spacing:-0.618px;color:#f1f1f1;">DWORD, </div>
<div class="t" style="left:287.3px;top:182.3px;letter-spacing:0.114px;color:#f1f1f1;">const </div>
<div class="t tr" style="left:320px;top:182.3px;color:#f1f1f1;">DWORD</div>
<svg style="left:47px;top:205px" width="6" height="6"><path d="M6 0V6H0Z" fill="#f1f1f1"/></svg>
<svg style="left:68px;top:204.5px" width="13" height="8"><path d="M3 0V6M0 3H6" stroke="#b180c7" stroke-width="2"/><path d="M9.5 2V8M6.5 5H12.5" stroke="#b180c7" stroke-width="2"/></svg>
<div class="a" style="left:86.7px;top:199.3px;width:79.4px;height:16px;background:#fcfab4"></div>
<div class="t" style="left:87.5px;top:200.3px;letter-spacing:-0.260px;color:#000;">CRenderTarget</div>
<div class="t" style="left:166.5px;top:200.3px;letter-spacing:0.010px;color:#f1f1f1;">Manager.cpp</div>
<svg style="left:65px;top:223px" width="6" height="6"><path d="M6 0V6H0Z" fill="#f1f1f1"/></svg>
<svg style="left:85px;top:220px" width="14" height="12"><path d="M0.3 6H12M6.8 1L12.3 6L6.8 11" stroke="#d8d8d8" stroke-width="2" fill="none"/></svg>
<div class="a" style="left:104.7px;top:217.3px;width:79.4px;height:16px;background:#fcfab4"></div>
<div class="t" style="left:105.5px;top:218.3px;letter-spacing:-0.260px;color:#000;">CRenderTarget</div>
<div class="t" style="left:184.5px;top:218.3px;letter-spacing:-0.125px;color:#f1f1f1;">Manager</div>
<svg style="left:102.5px;top:238.7px" width="10.8" height="10.8" viewBox="0 0 12 12"><path d="M6 0.7L10.8 3.2V8.8L6 11.3L1.2 8.8V3.2Z" fill="none" stroke="#b180c7" stroke-width="1.2"/><path d="M1.2 3.2L6 5.8L10.8 3.2M6 5.8V11.3" fill="none" stroke="#b180c7" stroke-width="1.1"/></svg>
<div class="t tr" style="left:123.7px;top:236.3px;color:#f1f1f1;">~</div>
<div class="a" style="left:130.7px;top:235.3px;width:79.4px;height:16px;background:#fcfab4"></div>
<div class="t" style="left:131.5px;top:236.3px;letter-spacing:-0.260px;color:#000;">CRenderTarget</div>
<div class="t" style="left:210.5px;top:236.3px;letter-spacing:-0.140px;color:#f1f1f1;">Manager()</div>
<svg style="left:102.5px;top:256.7px" width="10.8" height="10.8" viewBox="0 0 12 12"><path d="M6 0.7L10.8 3.2V8.8L6 11.3L1.2 8.8V3.2Z" fill="none" stroke="#b180c7" stroke-width="1.2"/><path d="M1.2 3.2L6 5.8L10.8 3.2M6 5.8V11.3" fill="none" stroke="#b180c7" stroke-width="1.1"/></svg>
<div class="t" style="left:123.7px;top:254.3px;letter-spacing:-0.162px;color:#f1f1f1;">CreateRenderTarget(const </div>
<div class="t" style="left:264.4px;top:254.3px;letter-spacing:-0.100px;color:#f1f1f1;">uint8_t, </div>
<div class="t tr" style="left:306.2px;top:254.3px;color:#f1f1f1;">const</div>
</div>
<div class="a" style="left:1342px;top:60px;width:17px;height:269px;background:#3e3e42"></div>
<svg style="left:1346.5px;top:66.5px" width="9" height="5"><path d="M0 5H9L4.5 0Z" fill="#999"/></svg>
<svg style="left:1346.5px;top:318px" width="9" height="5"><path d="M0 0H9L4.5 5Z" fill="#999"/></svg>
<div class="a" style="left:1347px;top:108px;width:8px;height:52px;background:#686868"></div>
<div class="a" style="left:1013px;top:329px;width:346px;height:17px;background:#3e3e42"></div>
<svg style="left:1019px;top:333px" width="5" height="8"><path d="M5 0V8L0 4Z" fill="#999"/></svg>
<svg style="left:1331px;top:333px" width="5" height="8"><path d="M0 0V8L5 4Z" fill="#999"/></svg>
<div class="a" style="left:1030px;top:333px;width:147px;height:9px;background:#686868"></div>
<div class="a" style="left:1342px;top:329px;width:17px;height:17px;background:#2d2d30"></div>
<!-- p50_props.py -->
<div class="a" style="left:1012px;top:353px;width:348px;height:261px;background:#252526;border:1px solid #3f3f46"></div>
<div class="a" style="left:1013px;top:354px;width:346px;height:20px;background:#2d2d30"></div>
<div class="t" style="left:1018px;top:357.5px;letter-spacing:-0.234px;color:#d0d0d0;">Özellikler</div>
<svg style="left:1073px;top:362px" width="231" height="5"><defs><pattern id="gp" width="4" height="4" patternUnits="userSpaceOnUse"><rect x="0" y="0" width="1" height="1" fill="#545458"/><rect x="2" y="2" width="1" height="1" fill="#545458"/></pattern></defs><rect width="231" height="5" fill="url(#gp)"/></svg>
<svg style="left:1311px;top:362px" width="8" height="4"><path d="M0 0H8L4 4Z" fill="#f1f1f1"/></svg><svg style="left:1328px;top:359px" width="8" height="11"><path d="M1.5 6V0.5H6M0 6.5H8M4 7V11" stroke="#f1f1f1" stroke-width="1" fill="none"/><path d="M6 0V6" stroke="#f1f1f1" stroke-width="2"/></svg><svg style="left:1344px;top:360px" width="9" height="8"><path d="M0.5 0L8.5 8M8.5 0L0.5 8" stroke="#f1f1f1" stroke-width="1.5"/></svg>
<div class="a" style="left:1013px;top:374px;width:346px;height:25px;background:#333337"></div>
<div class="a" style="left:1013px;top:399px;width:346px;height:1px;background:#28282b"></div>
<svg style="left:1349.5px;top:386px" width="6" height="3"><path d="M0 0H6L3 3Z" fill="#f1f1f1"/></svg>
<div class="a" style="left:1013px;top:400px;width:346px;height:26px;background:#2d2d30"></div>
<div class="a" style="left:1016px;top:401px;width:23px;height:22px;background:#14233a;border:1px solid #5c96d6;box-shadow:0 0 0 1px #10294d"></div>
<svg style="left:1020px;top:405px" width="15" height="15"><rect x="0" y="0" width="5" height="5" fill="#e8e8e8"/><path d="M1 2.5H4M2.5 1V4" stroke="#1e1e1e" stroke-width="1"/><rect x="0" y="9" width="5" height="5" fill="#e8e8e8"/><path d="M1 11.5H4M2.5 10V13" stroke="#1e1e1e" stroke-width="1"/><path d="M6 0.5H11M6 2.5H11M6 4.5H11M6 6.5H11M6 8.5H11M6 11.5H11M6 13.5H11" stroke="#e8e8e8" stroke-width="1"/><path d="M12 2.5H14M12 4.5H14M12 6.5H14M12 8.5H14M12 13.5H14" stroke="#e8e8e8" stroke-width="1"/></svg>
<svg style="left:1043px;top:405px" width="15" height="15"><rect x="0" y="0" width="7" height="7" fill="#e0e0e0"/><path d="M1.7 6L3.5 1.4L5.3 6M2.4 4.6H4.6" stroke="#2d2d30" stroke-width="1.2" fill="none"/><path d="M1 9.2H6.1V10.4L2.9 12.8H6.2V14.1H1V12.9L4.2 10.5H1Z" fill="#e0e0e0"/><path d="M11.2 3V10.5" stroke="#7cc8f8" stroke-width="2.2"/><path d="M8 7.5H14.4L11.2 12Z" fill="#7cc8f8"/></svg>
<div class="a" style="left:1065px;top:404px;width:1px;height:19px;background:#222224"></div><div class="a" style="left:1066px;top:404px;width:1px;height:19px;background:#38383c"></div>
<svg style="left:1070.5px;top:403.5px" width="17" height="17"><path d="M2 15L8.5 8.5" stroke="#9a9a9a" stroke-width="4.2" stroke-linecap="butt"/><path d="M0.5 13.5L3.5 16.5" stroke="#9a9a9a" stroke-width="0.1"/><path d="M8 1.5L12.5 0.2L16.3 3L16.8 7.5L13.5 10.5L9 10.5L6 7.5Z" fill="#9a9a9a"/><path d="M11.5 2.3L14.2 3.4L13.2 5.6L10.8 4.6Z" fill="#7a7a7a"/></svg>
<div class="a" style="left:1013px;top:550px;width:346px;height:1px;background:#333337"></div>
</body></html>
